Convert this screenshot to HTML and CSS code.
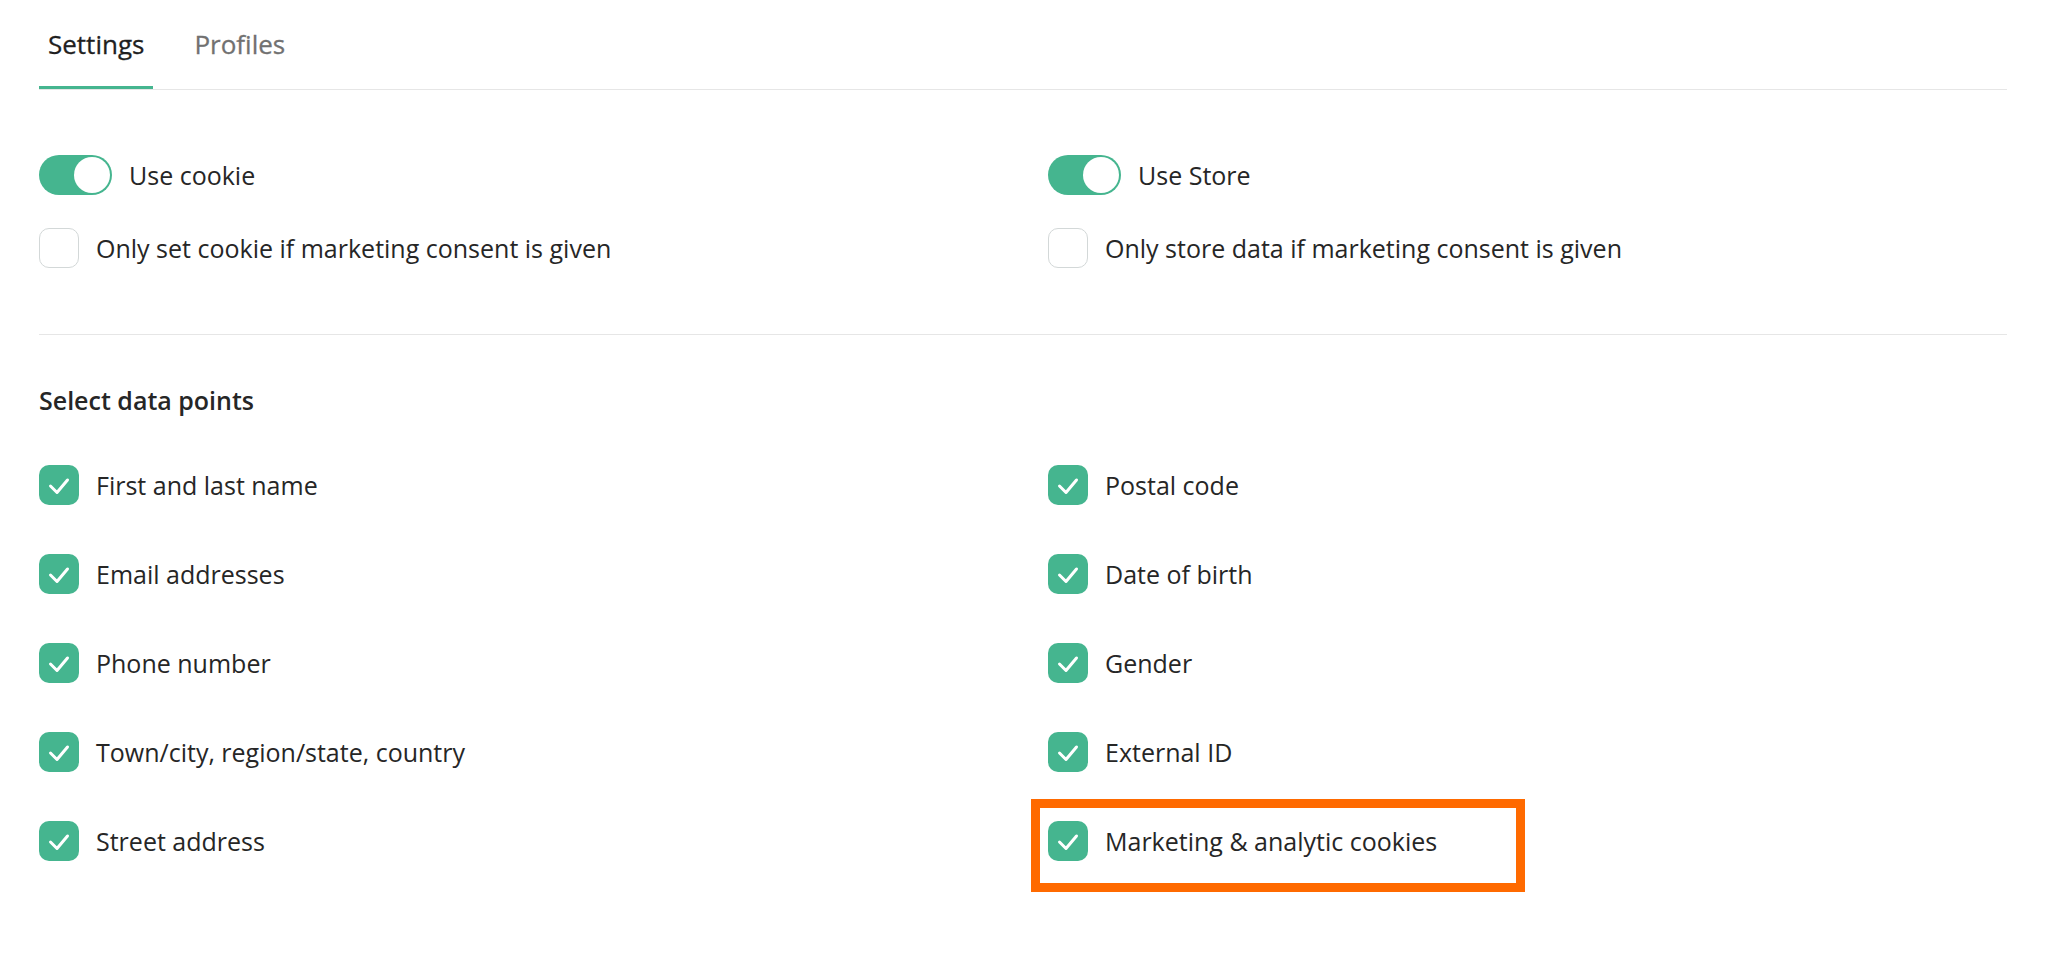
FILE: index.html
```html
<!DOCTYPE html>
<html lang="en">
<head>
<meta charset="utf-8">
<title>Settings</title>
<link rel="stylesheet" href="styles.css">
</head>
<body>
<div class="page">
  <nav class="tabs">
    <div class="tab active">Settings</div>
    <div class="tab">Profiles</div>
  </nav>

  <section class="options">
    <div class="col">
      <label class="row">
        <span class="toggle on"><span class="knob"></span></span>
        <span class="toggle-label">Use cookie</span>
      </label>
      <label class="row">
        <span class="box"></span>
        <span class="label">Only set cookie if marketing consent is given</span>
      </label>
    </div>
    <div class="col">
      <label class="row">
        <span class="toggle on"><span class="knob"></span></span>
        <span class="toggle-label">Use Store</span>
      </label>
      <label class="row">
        <span class="box"></span>
        <span class="label">Only store data if marketing consent is given</span>
      </label>
    </div>
  </section>

  <section class="points">
    <h2 class="heading">Select data points</h2>
    <div class="grid">
      <label class="row"><span class="box checked"><svg viewBox="0 0 40 40"><polyline points="11.5,21 18,27.5 28.5,15"/></svg></span><span class="label">First and last name</span></label>
      <label class="row"><span class="box checked"><svg viewBox="0 0 40 40"><polyline points="11.5,21 18,27.5 28.5,15"/></svg></span><span class="label">Postal code</span></label>
      <label class="row"><span class="box checked"><svg viewBox="0 0 40 40"><polyline points="11.5,21 18,27.5 28.5,15"/></svg></span><span class="label">Email addresses</span></label>
      <label class="row"><span class="box checked"><svg viewBox="0 0 40 40"><polyline points="11.5,21 18,27.5 28.5,15"/></svg></span><span class="label">Date of birth</span></label>
      <label class="row"><span class="box checked"><svg viewBox="0 0 40 40"><polyline points="11.5,21 18,27.5 28.5,15"/></svg></span><span class="label">Phone number</span></label>
      <label class="row"><span class="box checked"><svg viewBox="0 0 40 40"><polyline points="11.5,21 18,27.5 28.5,15"/></svg></span><span class="label">Gender</span></label>
      <label class="row"><span class="box checked"><svg viewBox="0 0 40 40"><polyline points="11.5,21 18,27.5 28.5,15"/></svg></span><span class="label">Town/city, region/state, country</span></label>
      <label class="row"><span class="box checked"><svg viewBox="0 0 40 40"><polyline points="11.5,21 18,27.5 28.5,15"/></svg></span><span class="label">External ID</span></label>
      <label class="row"><span class="box checked"><svg viewBox="0 0 40 40"><polyline points="11.5,21 18,27.5 28.5,15"/></svg></span><span class="label">Street address</span></label>
      <label class="row highlight"><span class="box checked"><svg viewBox="0 0 40 40"><polyline points="11.5,21 18,27.5 28.5,15"/></svg></span><span class="label">Marketing &amp; analytic cookies</span></label>
    </div>
  </section>
</div>
</body>
</html>
```

FILE: styles.css
```css
*, *::before, *::after { box-sizing: border-box; }

html, body {
  margin: 0;
  padding: 0;
  background: #ffffff;
}

body {
  font-family: "Open Sans", "Noto Sans", "Liberation Sans", sans-serif;
  color: #262626;
}

.page {
  min-height: 956px;
  padding: 0 41px 0 39px;
}

/* Tabs */
.tabs {
  display: flex;
  gap: 32px;
  border-bottom: 1px solid #e6e6e6;
}

.tab {
  height: 89px;
  line-height: 89px;
  padding: 0 9px;
  font-size: 26px;
  font-weight: 500;
  -webkit-text-stroke: 0.3px currentColor;
  color: #717171;
}

.tab.active {
  color: #1f1f1f;
  box-shadow: inset 0 -3px 0 #45b58f;
}

/* Options (toggles) */
.options {
  display: grid;
  grid-template-columns: 1fr 1fr;
  column-gap: 50px;
  padding: 65px 0 66px;
  border-bottom: 1px solid #e6e6e6;
}

.col {
  display: flex;
  flex-direction: column;
  gap: 33px;
}

.row {
  display: flex;
  align-items: center;
  gap: 17px;
  font-size: 25px;
  line-height: 34px;
}

.toggle {
  position: relative;
  width: 73px;
  height: 40px;
  border-radius: 20px;
  background: #45b58f;
  flex: none;
}

.toggle .knob {
  position: absolute;
  top: 2px;
  right: 2px;
  width: 36px;
  height: 36px;
  border-radius: 50%;
  background: #ffffff;
}

.box {
  width: 40px;
  height: 40px;
  flex: none;
  border-radius: 10px;
  border: 1.5px solid #d3d8d8;
  background: #ffffff;
  display: flex;
}

.box.checked {
  border: none;
  background: #45b58f;
}

.box svg {
  width: 40px;
  height: 40px;
}

.box polyline {
  fill: none;
  stroke: #ffffff;
  stroke-width: 3;
  stroke-linecap: round;
  stroke-linejoin: round;
}

/* Data points */
.heading {
  margin: 48px 0 0;
  font-size: 25px;
  line-height: 34px;
  font-weight: 600;
  color: #262626;
}

.grid {
  display: grid;
  grid-template-columns: 1fr 1fr;
  column-gap: 50px;
  row-gap: 49px;
  margin-top: 48px;
}

.highlight {
  position: relative;
}

.highlight::after {
  content: "";
  position: absolute;
  left: -17px;
  top: -22px;
  width: 494px;
  height: 93px;
  border: 9px solid #ff6a00;
}
```
